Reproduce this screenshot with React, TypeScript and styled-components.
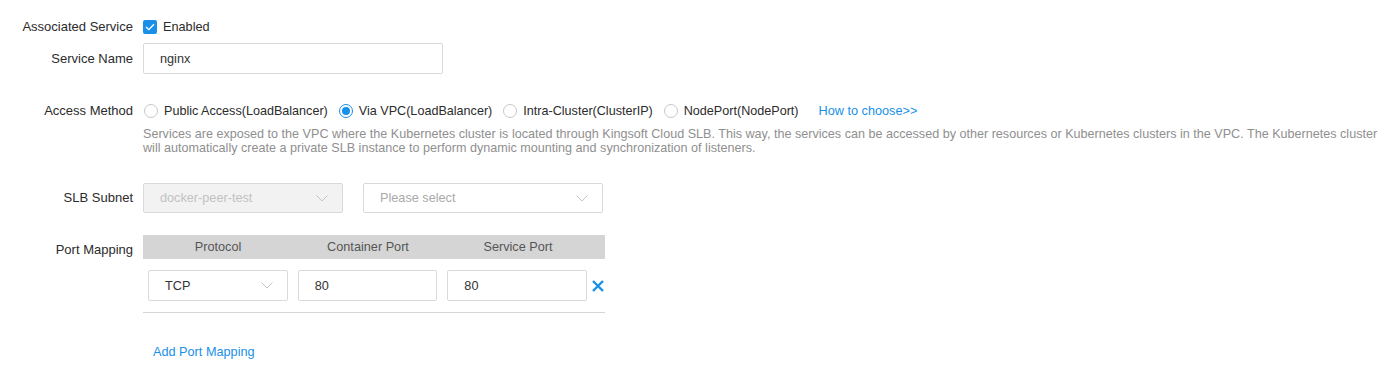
import React from "react";
import styled, { createGlobalStyle } from "styled-components";

const GlobalStyle = createGlobalStyle`
    body {
        margin: 0;
        background: #fff;
        font-family: "Liberation Sans", Arial, sans-serif;
        font-size: 12.7px;
        color: #333;
    }
`;

const BLUE = "#1890e8";

const Form = styled.div`
    padding-top: 17px;
    display: flex;
    flex-direction: column;
`;

const Row = styled.div<{ $mt?: number; $align?: string }>`
    display: grid;
    grid-template-columns: 133px 1fr;
    column-gap: 10px;
    margin-top: ${(p) => p.$mt ?? 0}px;
    align-items: ${(p) => p.$align ?? "center"};
`;

const Label = styled.div<{ $lh?: number }>`
    text-align: right;
    color: #2b2b2b;
    font-size: 13px;
    white-space: nowrap;
    line-height: ${(p) => p.$lh ?? 20}px;
`;

const Inline = styled.div`
    display: flex;
    align-items: center;
    height: 20px;
    color: #2b2b2b;
`;

const CheckBox = styled.span`
    width: 14px;
    height: 14px;
    border-radius: 2px;
    background: ${BLUE};
    display: inline-flex;
    align-items: center;
    justify-content: center;
    margin-right: 6px;
`;

const TextInput = styled.div<{ $w: number }>`
    box-sizing: border-box;
    width: ${(p) => p.$w}px;
    height: 31px;
    border: 1px solid #d9d9d9;
    border-radius: 2px;
    padding: 0 16px;
    display: flex;
    align-items: center;
    color: #333;
    background: #fff;
`;

const Select = styled.div<{ $w: number; $disabled?: boolean; $placeholder?: boolean }>`
    box-sizing: border-box;
    width: ${(p) => p.$w}px;
    height: ${(p) => (p.$disabled || p.$placeholder ? 30 : 31)}px;
    border: 1px solid #d9d9d9;
    border-radius: 2px;
    padding: 0 14px 0 16px;
    display: flex;
    align-items: center;
    justify-content: space-between;
    background: ${(p) => (p.$disabled ? "#f2f2f2" : "#fff")};
    color: ${(p) => (p.$disabled ? "#c2c2c2" : p.$placeholder ? "#aaa" : "#333")};
`;

const RadioGroup = styled.div`
    display: flex;
    align-items: center;
    height: 20px;
`;

const RadioItem = styled.label`
    display: flex;
    align-items: center;
    margin-right: 10px;
    color: #2b2b2b;
    font-size: 12.6px;
    white-space: nowrap;
`;

const RadioCircle = styled.span<{ $checked?: boolean }>`
    box-sizing: border-box;
    width: 14px;
    height: 14px;
    border-radius: 50%;
    border: 1px solid ${(p) => (p.$checked ? BLUE : "#c8c8c8")};
    margin: 0 6px 0 1px;
    display: inline-flex;
    align-items: center;
    justify-content: center;
    &::after {
        content: "";
        width: 8px;
        height: 8px;
        border-radius: 50%;
        background: ${(p) => (p.$checked ? BLUE : "transparent")};
    }
`;

const LinkText = styled.span<{ $ml?: number }>`
    color: ${BLUE};
    margin-left: ${(p) => p.$ml ?? 0}px;
    cursor: pointer;
    white-space: nowrap;
`;

const Desc = styled.div`
    margin-top: 6px;
    color: #8f8f8f;
    font-size: 12.6px;
    line-height: 14px;
    white-space: nowrap;
`;

const SelectPair = styled.div`
    display: flex;
    gap: 20px;
`;

const PortBlock = styled.div`
    width: 462px;
`;

const PortHeader = styled.div`
    display: grid;
    grid-template-columns: repeat(3, 140px);
    column-gap: 10px;
    padding-left: 5px;
    height: 24px;
    align-items: center;
    background: #d5d5d5;
    color: #555;
    text-align: center;
`;

const PortRow = styled.div`
    display: flex;
    align-items: center;
    gap: 10px;
    padding: 11px 0 11px 5px;
    border-bottom: 1px solid #d6d6d6;
`;

const RemoveBtn = styled.span`
    margin-left: -6px;
    display: inline-flex;
    cursor: pointer;
`;

const AddRow = styled.div`
    padding-left: 10px;
    margin-top: 29px;
    line-height: 20px;
`;

const Chevron = () => (
    <svg width="12" height="7" viewBox="0 0 12 7">
        <path d="M0.5 0.5 L6 6 L11.5 0.5" fill="none" stroke="#c4c4c4" strokeWidth="1" />
    </svg>
);

const radios = [
    { label: "Public Access(LoadBalancer)", checked: false },
    { label: "Via VPC(LoadBalancer)", checked: true },
    { label: "Intra-Cluster(ClusterIP)", checked: false },
    { label: "NodePort(NodePort)", checked: false },
];

const App = () => {
    return (
        <>
            <GlobalStyle />
            <Form>
                <Row>
                    <Label>Associated Service</Label>
                    <Inline>
                        <CheckBox>
                            <svg width="10" height="8" viewBox="0 0 10 8">
                                <path d="M1 4 L3.8 6.6 L9 1.2" fill="none" stroke="#fff" strokeWidth="1.3" />
                            </svg>
                        </CheckBox>
                        Enabled
                    </Inline>
                </Row>
                <Row $mt={6}>
                    <Label>Service Name</Label>
                    <TextInput $w={300}>nginx</TextInput>
                </Row>
                <Row $mt={27} $align="start">
                    <Label>Access Method</Label>
                    <div>
                        <RadioGroup>
                            {radios.map((r) => (
                                <RadioItem key={r.label}>
                                    <RadioCircle $checked={r.checked} />
                                    {r.label}
                                </RadioItem>
                            ))}
                            <LinkText $ml={10}>How to choose&gt;&gt;</LinkText>
                        </RadioGroup>
                        <Desc>
                            Services are exposed to the VPC where the Kubernetes cluster is located through Kingsoft Cloud SLB. This way, the services can be accessed by other resources or Kubernetes clusters in the VPC. The Kubernetes cluster
                            <br />
                            will automatically create a private SLB instance to perform dynamic mounting and synchronization of listeners.
                        </Desc>
                    </div>
                </Row>
                <Row $mt={28}>
                    <Label>SLB Subnet</Label>
                    <SelectPair>
                        <Select $w={200} $disabled>
                            docker-peer-test
                            <Chevron />
                        </Select>
                        <Select $w={240} $placeholder>
                            Please select
                            <Chevron />
                        </Select>
                    </SelectPair>
                </Row>
                <Row $mt={22} $align="start">
                    <Label $lh={30}>Port Mapping</Label>
                    <div>
                        <PortBlock>
                            <PortHeader>
                                <span>Protocol</span>
                                <span>Container Port</span>
                                <span>Service Port</span>
                            </PortHeader>
                            <PortRow>
                                <Select $w={140}>
                                    TCP
                                    <Chevron />
                                </Select>
                                <TextInput $w={140}>80</TextInput>
                                <TextInput $w={140}>80</TextInput>
                                <RemoveBtn>
                                    <svg width="14" height="14" viewBox="0 0 14 14">
                                        <path d="M2 2 L12 12 M12 2 L2 12" stroke={BLUE} strokeWidth="2.4" />
                                    </svg>
                                </RemoveBtn>
                            </PortRow>
                        </PortBlock>
                        <AddRow>
                            <LinkText>Add Port Mapping</LinkText>
                        </AddRow>
                    </div>
                </Row>
            </Form>
        </>
    );
};

export default App;
